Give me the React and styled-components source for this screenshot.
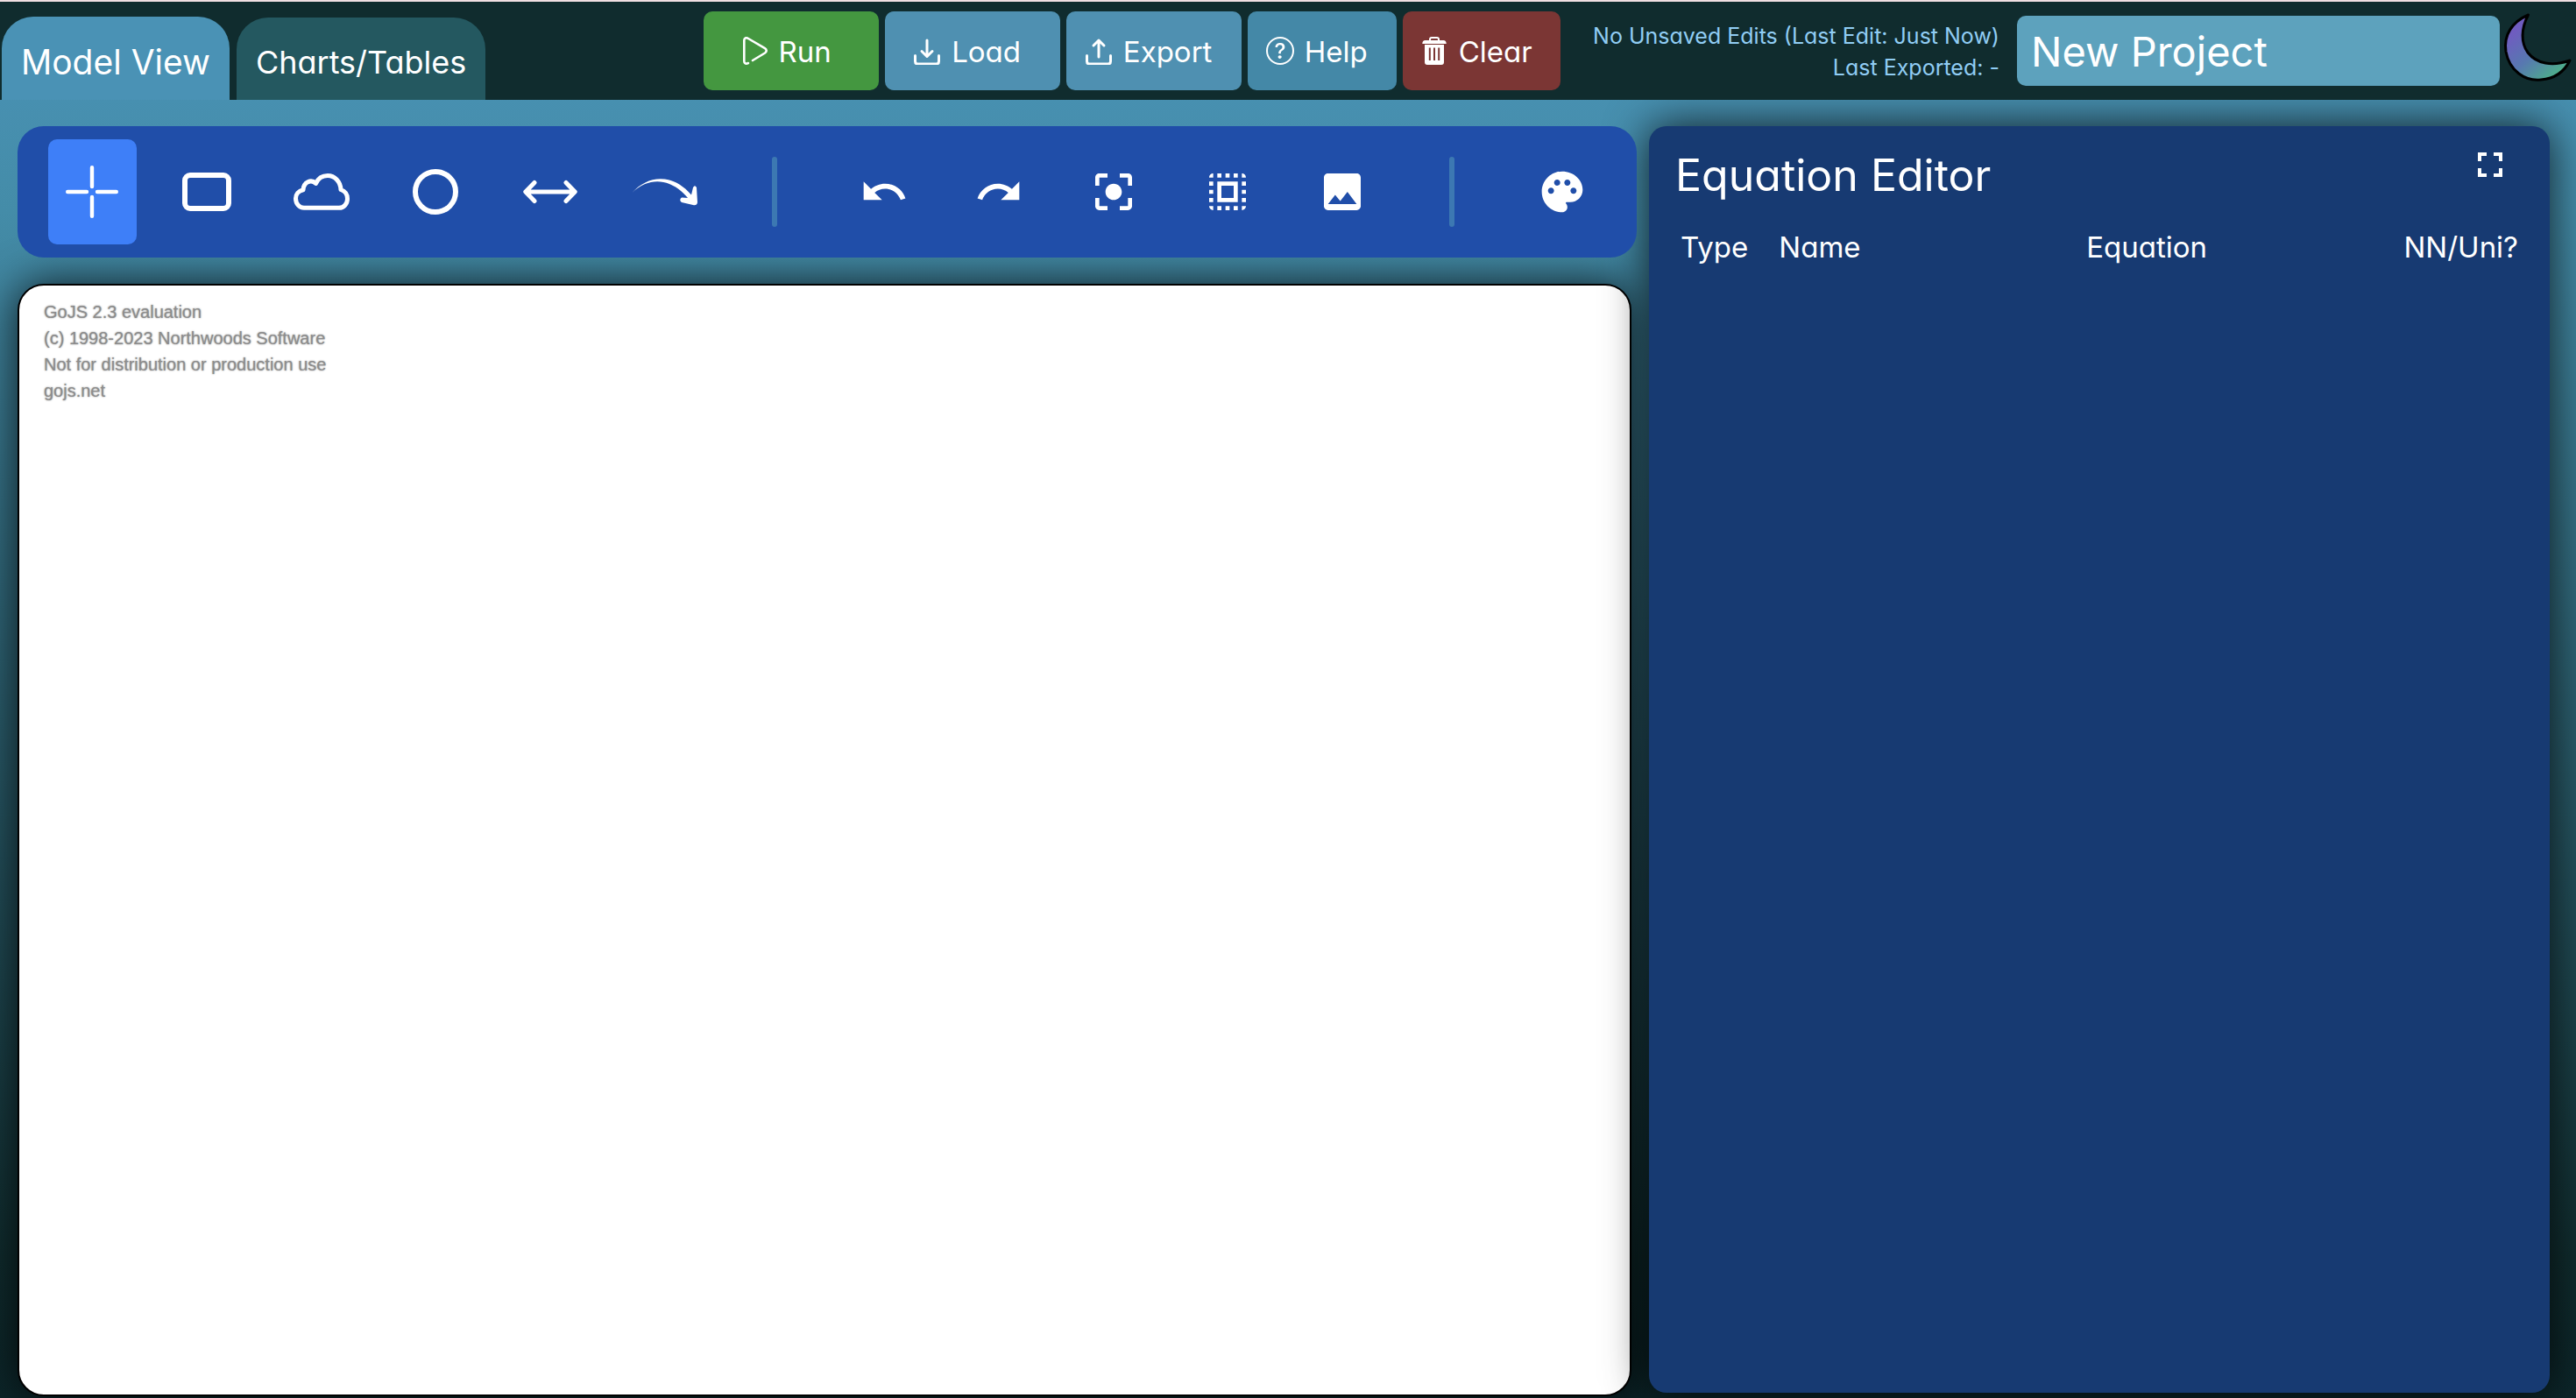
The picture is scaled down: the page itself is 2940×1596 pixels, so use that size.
import React from "react";
import styled, { createGlobalStyle } from "styled-components";
import { BsQuestionCircle } from "react-icons/bs";
import {
  MdUndo,
  MdRedo,
  MdCenterFocusStrong,
  MdSelectAll,
  MdImage,
  MdFullscreen,
} from "react-icons/md";

const GlobalStyle = createGlobalStyle`
  * { box-sizing: border-box; }
  body {
    margin: 0;
    font-family: Inter, "Liberation Sans", sans-serif;
    font-feature-settings: "cv11";
    color: #fff;
  }
  button, input { font: inherit; font-feature-settings: inherit; color: inherit; border: 0; }
  button { cursor: pointer; }
`;

const Page = styled.div`
  min-height: 100vh;
  display: flex;
  flex-direction: column;
  border-top: 2px solid #f0dfe2;
  background: linear-gradient(#4a93b7, #448ca8 15%, #102c2e 90%, #0c2529);
`;

const Header = styled.header`
  position: relative;
  z-index: 2;
  height: 112px;
  display: grid;
  grid-template-columns: 27.3% auto 1fr;
  align-items: center;
  background: #102c2e;
`;

const Tabs = styled.nav`
  align-self: end;
  display: flex;
  align-items: flex-end;
  gap: 8px;
  padding-left: 2px;
`;

const Tab = styled.button`
  height: ${(p) => (p.$active ? 95 : 94)}px;
  padding: 8px 22px 0;
  border-radius: 36px 36px 0 0;
  background: ${(p) => (p.$active ? "#4a92b5" : "#245860")};
  font-size: ${(p) => (p.$active ? 39 : 36)}px;
  white-space: nowrap;
`;

const Actions = styled.div`
  display: flex;
  gap: 7px;
`;

const Action = styled.button`
  width: ${(p) => p.$width}px;
  height: 90px;
  padding: 2px 12px 0 0;
  display: flex;
  align-items: center;
  justify-content: center;
  gap: 12px;
  border-radius: 10px;
  background: ${(p) => p.$color};
  font-size: 33px;

  svg { width: 32px; height: 32px; margin-bottom: 2px; flex: none; }
`;

const Project = styled.div`
  display: flex;
  align-items: center;
  justify-content: flex-end;
`;

const Status = styled.p`
  margin: 2px 20px 0 0;
  font-size: 25px;
  line-height: 36px;
  text-align: right;
  white-space: nowrap;
  color: #90cdf4;
`;

const ProjectName = styled.input`
  width: 551px;
  height: 80px;
  padding: 0 16px;
  border-radius: 10px;
  background: #5da2bd;
  font-size: 47px;
`;

const ThemeToggle = styled.button`
  width: 87px;
  height: 80px;
  padding: 0 4px;
  background: none;

  svg { display: block; width: 80px; height: 80px; overflow: visible; }
`;

const Workspace = styled.main`
  flex: 1;
  display: grid;
  grid-template-columns: 1fr 35.57%;
  gap: 14px;
  padding: 30px 30px 2px 20px;
`;

const Model = styled.section`
  display: flex;
  flex-direction: column;
  gap: 30px;
`;

const Toolbar = styled.div`
  position: relative;
  z-index: 1;
  height: 150px;
  padding: 0 20px;
  display: flex;
  align-items: center;
  border-radius: 30px;
  background: #204ea9;
`;

const Tool = styled.button`
  flex: 1;
  height: 120px;
  margin: 0 15px;
  padding: 0;
  display: flex;
  align-items: center;
  justify-content: center;
  border-radius: 10px;
  background: ${(p) => (p.$active ? "#3e7ff8" : "none")};

  svg { display: block; flex: none; }
`;

const Separator = styled.div`
  width: 6px;
  height: 80px;
  margin: 0 57px;
  border-radius: 3px;
  background: #3c78b2;
`;

const Canvas = styled.div`
  flex: 1;
  margin-right: 6px;
  padding: 15px 28px;
  border: 2px solid #000;
  border-radius: 30px;
  background: #fff;
  box-shadow: 0 0 50px rgba(0, 0, 0, 0.8);
  font-family: "Liberation Sans", Arial, sans-serif;
  font-size: 20px;
  line-height: 30px;
  color: #8c8c8c;
  text-shadow: 0 0 2px #8c8c8c;

  p { margin: 0; }
`;

const Editor = styled.section`
  position: relative;
  margin-bottom: 4px;
  padding: 24px 30px;
  border-radius: 20px;
  background: #173a72;
  box-shadow: 0 0 50px rgba(0, 0, 0, 0.8);
`;

const EditorHead = styled.div`
  display: flex;
  justify-content: space-between;
  align-items: flex-start;
`;

const Title = styled.h1`
  margin: 0;
  font-size: 50px;
  font-weight: 400;
  line-height: 64px;
`;

const IconButton = styled.button`
  margin: -4px 14px 0;
  padding: 0;
  background: none;

  svg { display: block; }
`;

const Equations = styled.table`
  width: 100%;
  margin-top: 30px;
  table-layout: fixed;
  border-collapse: collapse;
`;

const Column = styled.th`
  width: ${(p) => p.$width};
  padding: 0 6px;
  font-size: 33px;
  font-weight: 400;
  line-height: 40px;
  text-align: ${(p) => p.$align || "left"};
`;

const PlayIcon = () => (
  <svg viewBox="0 0 32 32" fill="none" stroke="#fff" strokeWidth="2.6" strokeLinecap="round" aria-hidden="true">
    <path d="M10 30 C7 31.600 5.300 30 5.300 28 V4 C5.300 1.500 7.500 0.500 10 2 L29 13.200 C31.300 14.700 31.300 17 29 18.500 L15 27" />
  </svg>
);

const TrayIcon = ({ up }) => (
  <svg viewBox="0 0 32 32" fill="none" stroke="#fff" strokeWidth="3" strokeLinecap="round" strokeLinejoin="round" aria-hidden="true">
    <path d="M2.500 21.500 V28 Q2.500 31 5.500 31 H26.500 Q29.500 31 29.500 28 V21.500" />
    {up ? <path d="M16 23 V4 M10 10 L16 4 L22 10" /> : <path d="M16 4 V22.500 M10 16.500 L16 22.500 L22 16.500" />}
  </svg>
);

const TrashIcon = () => (
  <svg viewBox="0 0 32 32" fill="#fff" aria-hidden="true">
    <path d="M10 4.500 V3 Q10 0 13 0 H19 Q22 0 22 3 V4.500 H20 V3 Q20 2 19 2 H13 Q12 2 12 3 V4.500 Z" />
    <path d="M5 4 H27 Q29.700 4.500 29.700 8 H2.300 Q2.300 4.500 5 4 Z" />
    <path
      fillRule="evenodd"
      d="M5 9 H27 V29 Q27 32 24 32 H8 Q5 32 5 29 Z M9.800 12.500 V27 H11.800 V12.500 Z M15 12.500 V27 H17 V12.500 Z M20.200 12.500 V27 H22.200 V12.500 Z"
    />
  </svg>
);

const MoonIcon = () => (
  <svg viewBox="0 0 80 80" aria-hidden="true">
    <defs>
      <linearGradient id="moon" x1="0.2" y1="0.2" x2="0.8" y2="0.9">
        <stop offset="0" stopColor="#6f5cc0" />
        <stop offset="0.5" stopColor="#5778b0" />
        <stop offset="1" stopColor="#4eac8c" />
      </linearGradient>
    </defs>
    <path
      d="M28.500 -1 C10 7 0 22 3 41 C7 63 25 75 43 73 C57 72 69 65 76 51 C56 58 38 55 28 42 C20 31 20 15 28.500 -1 Z"
      fill="url(#moon)"
      stroke="#000"
      strokeWidth="3"
      strokeLinejoin="round"
    />
  </svg>
);

const CrossIcon = () => (
  <svg width="60" height="60" viewBox="0 0 60 60" stroke="#fff" strokeWidth="4.4" strokeLinecap="round" aria-hidden="true">
    <path d="M30 2.200 V24 M30 36 V57.800 M2.200 30 H24 M36 30 H57.800" />
  </svg>
);

const StockIcon = () => (
  <svg width="58" height="46" viewBox="0 0 58 46" fill="none" stroke="#fff" strokeWidth="6" aria-hidden="true">
    <rect x="4" y="4" width="50" height="38" rx="6" />
  </svg>
);

const CloudIcon = () => (
  <svg width="64" height="42" viewBox="0 0 64 42" fill="none" stroke="#fff" strokeWidth="5" strokeLinejoin="round" aria-hidden="true">
    <path d="M12 39.300 H52 C57.500 39.300 61.500 34.500 61.500 29 C61.500 23.500 58.500 20 54 18.500 C53.500 9 47 2.600 39 2.600 C33 2.600 28 6 25.500 11.500 C20 6 11.500 10 11 18.800 C5.500 20 2.500 24 2.500 28.500 C2.500 34.500 6.500 39.300 12 39.300 Z" />
  </svg>
);

const CircleIcon = () => (
  <svg width="52" height="52" viewBox="0 0 52 52" fill="none" stroke="#fff" strokeWidth="6" aria-hidden="true">
    <circle cx="26" cy="26" r="23" />
  </svg>
);

const FlowIcon = () => (
  <svg width="62" height="28" viewBox="0 0 62 28" fill="none" stroke="#fff" strokeWidth="5" strokeLinecap="round" strokeLinejoin="round" aria-hidden="true">
    <path d="M3 14 H59 M13 3.500 L2.800 14 L13 24.500 M49 3.500 L59.200 14 L49 24.500" />
  </svg>
);

const InfluenceIcon = () => (
  <svg width="76" height="32" viewBox="0 0 76 32" fill="#fff" aria-hidden="true">
    <path d="M0.500 17 C18 -3 46 -6 68 19.500 L70 11 Q72 7.500 74 11 L75 28 Q74.500 31.500 71 31.200 L57 28 Q53.500 25 57 22.500 L64 23 C46 2 22 -3 0.500 17 Z" />
  </svg>
);

const PaletteIcon = () => (
  <svg width="56" height="56" viewBox="0 0 24 24" fill="#fff" aria-hidden="true">
    <path d="M12 2C6.490 2 2 6.490 2 12s4.490 10 10 10c1.380 0 2.500-1.120 2.500-2.500 0-.610-.230-1.200-.640-1.670-.080-.100-.130-.210-.130-.330 0-.280.220-.500.500-.500H16c3.310 0 6-2.690 6-6 0-4.960-4.490-9-10-9zm5.500 11c-.830 0-1.500-.670-1.500-1.500s.670-1.500 1.500-1.500 1.500.670 1.500 1.500-.670 1.500-1.500 1.500zm-3-4c-.830 0-1.500-.670-1.500-1.500S13.670 6 14.500 6s1.500.670 1.500 1.500S15.330 9 14.500 9zM5 11.500c0-.830.670-1.500 1.500-1.500s1.500.670 1.500 1.500S7.330 13 6.500 13 5 12.330 5 11.500zm6-4c0 .830-.670 1.500-1.500 1.500S8 8.330 8 7.500 8.670 6 9.500 6s1.500.670 1.500 1.500z" />
  </svg>
);

const actions = [
  { label: "Run", width: 200, color: "#449740", icon: <PlayIcon /> },
  { label: "Load", width: 200, color: "#4f90b1", icon: <TrayIcon /> },
  { label: "Export", width: 200, color: "#4f90b1", icon: <TrayIcon up /> },
  { label: "Help", width: 170, color: "#4488a7", icon: <BsQuestionCircle /> },
  { label: "Clear", width: 180, color: "#7b3634", icon: <TrashIcon /> },
];

const toolGroups = [
  [
    { label: "Pointer", icon: <CrossIcon />, active: true },
    { label: "Stock", icon: <StockIcon /> },
    { label: "Cloud", icon: <CloudIcon /> },
    { label: "Variable", icon: <CircleIcon /> },
    { label: "Flow", icon: <FlowIcon /> },
    { label: "Influence", icon: <InfluenceIcon /> },
  ],
  [
    { label: "Undo", icon: <MdUndo size={56} /> },
    { label: "Redo", icon: <MdRedo size={56} /> },
    { label: "Center", icon: <MdCenterFocusStrong size={56} /> },
    { label: "Select all", icon: <MdSelectAll size={56} /> },
    { label: "Save image", icon: <MdImage size={56} /> },
  ],
  [{ label: "Colors", icon: <PaletteIcon /> }],
];

export default function App() {
  return (
    <Page>
      <GlobalStyle />
      <Header>
        <Tabs>
          <Tab $active>Model View</Tab>
          <Tab>Charts/Tables</Tab>
        </Tabs>
        <Actions>
          {actions.map((a) => (
            <Action key={a.label} $width={a.width} $color={a.color}>
              {a.icon}
              {a.label}
            </Action>
          ))}
        </Actions>
        <Project>
          <Status>
            No Unsaved Edits (Last Edit: Just Now)
            <br />
            Last Exported: -
          </Status>
          <ProjectName aria-label="Project name" defaultValue="New Project" />
          <ThemeToggle aria-label="Toggle theme">
            <MoonIcon />
          </ThemeToggle>
        </Project>
      </Header>
      <Workspace>
        <Model>
          <Toolbar role="toolbar">
            {toolGroups.map((group, i) => (
              <React.Fragment key={i}>
                {i > 0 && <Separator />}
                {group.map((t) => (
                  <Tool key={t.label} aria-label={t.label} $active={t.active}>
                    {t.icon}
                  </Tool>
                ))}
              </React.Fragment>
            ))}
          </Toolbar>
          <Canvas>
            <p>GoJS 2.3 evaluation</p>
            <p>(c) 1998-2023 Northwoods Software</p>
            <p>Not for distribution or production use</p>
            <p>gojs.net</p>
          </Canvas>
        </Model>
        <Editor>
          <EditorHead>
            <Title>Equation Editor</Title>
            <IconButton aria-label="Full screen">
              <MdFullscreen size={48} />
            </IconButton>
          </EditorHead>
          <Equations>
            <thead>
              <tr>
                <Column $width="11.6%">Type</Column>
                <Column $width="17.6%">Name</Column>
                <Column $width="52.8%" $align="center">Equation</Column>
                <Column $width="18%" $align="right">NN/Uni?</Column>
              </tr>
            </thead>
          </Equations>
        </Editor>
      </Workspace>
    </Page>
  );
}
